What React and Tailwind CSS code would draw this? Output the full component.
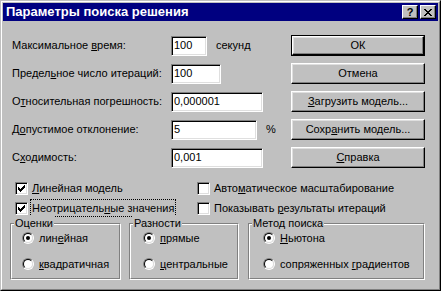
import React from "react";

function U({ children }) {
  return <span className="underline decoration-1 underline-offset-[1px]">{children}</span>;
}

function Btn({ children, isDefault }) {
  if (isDefault) {
    return (
      <div className="h-[21px] w-[134px] border border-black">
        <div className="flex h-full w-full items-center justify-center border border-t-white border-l-white border-r-black border-b-black shadow-[inset_-1px_-1px_0_#808080,inset_1px_1px_0_#dfdfdf]">
          {children}
        </div>
      </div>
    );
  }
  return (
    <div className="flex h-[21px] w-[134px] items-center justify-center border border-t-white border-l-white border-r-black border-b-black shadow-[inset_-1px_-1px_0_#808080,inset_1px_1px_0_#dfdfdf]">
      {children}
    </div>
  );
}

function Edit({ value, w }) {
  return (
    <div
      className={`flex h-[20px] items-center border border-t-[#808080] border-l-[#808080] border-r-white border-b-white bg-white pl-[2px] shadow-[inset_1px_1px_0_#000,inset_-1px_-1px_0_#dfdfdf] ${w}`}
    >
      {value}
    </div>
  );
}

function Row({ label, edit, suffix }) {
  return (
    <div className="flex h-[21px] items-center">
      <div className="w-[159px]">{label}</div>
      {edit}
      {suffix}
    </div>
  );
}

function Check({ checked }) {
  return (
    <div className="h-[13px] w-[13px] shrink-0 border border-t-[#808080] border-l-[#808080] border-r-white border-b-white bg-white shadow-[inset_1px_1px_0_#000,inset_-1px_-1px_0_#dfdfdf]">
      {checked && (
        <svg width="11" height="11" viewBox="0 0 11 11" shapeRendering="crispEdges">
          <path d="M2 4h1v3h-1zM3 5h1v3h-1zM4 6h1v3h-1zM5 5h1v3h-1zM6 4h1v3h-1zM7 3h1v3h-1zM8 2h1v3h-1z" fill="#000" />
        </svg>
      )}
    </div>
  );
}

function Radio({ on }) {
  return (
    <div className="h-[12px] w-[12px] shrink-0 rounded-full border border-t-[#808080] border-l-[#808080] border-r-white border-b-white">
      <div className="flex h-full w-full items-center justify-center rounded-full border border-t-black border-l-black border-r-[#dfdfdf] border-b-[#dfdfdf] bg-white">
        {on && <div className="h-[4px] w-[4px] rounded-full bg-black" />}
      </div>
    </div>
  );
}

function Group({ title, w, pl, children }) {
  return (
    <div className={`relative h-[57px] border border-t-[#808080] border-l-[#808080] border-r-white border-b-white ${w}`}>
      <div className={`flex h-full w-full flex-col gap-[10px] border border-t-white border-l-white border-r-[#808080] border-b-[#808080] pt-[5px] ${pl}`}>
        {children}
      </div>
      <span className="absolute left-[3px] top-[-8px] bg-[#c0c0c0] px-[1px] leading-[14px]">{title}</span>
    </div>
  );
}

function RadioRow({ on, children }) {
  return (
    <div className="flex h-[16px] items-center gap-[5px]">
      <Radio on={on} />
      <span>{children}</span>
    </div>
  );
}

export default function App() {
  return (
    <div className="h-[291px] w-[441px] overflow-hidden font-['Liberation_Sans',Arial,sans-serif] text-[11px] text-black">
      <div className="h-full w-full border border-t-[#c0c0c0] border-l-[#c0c0c0] border-r-black border-b-black bg-[#c0c0c0]">
        <div className="h-full w-full border border-t-white border-l-white border-r-[#808080] border-b-[#808080] p-[1px]">
          {/* Title bar */}
          <div className="flex h-[18px] items-center justify-between bg-[#000080] pl-[3px] pr-[2px]">
            <span className="text-[13px] font-bold text-white">Параметры поиска решения</span>
            <div className="flex gap-[2px]">
              <div className="flex h-[14px] w-[16px] items-center justify-center border border-t-white border-l-white border-r-black border-b-black bg-[#c0c0c0] text-[11px] font-bold leading-none shadow-[inset_-1px_-1px_0_#808080]">
                ?
              </div>
              <div className="flex h-[14px] w-[16px] items-center justify-center border border-t-white border-l-white border-r-black border-b-black bg-[#c0c0c0] shadow-[inset_-1px_-1px_0_#808080]">
                <svg width="8" height="7" viewBox="0 0 8 7" shapeRendering="crispEdges">
                  <path d="M0 0h2v1h-2zM6 0h2v1h-2zM1 1h2v1h-2zM5 1h2v1h-2zM2 2h4v1h-4zM3 3h2v1h-2zM2 4h4v1h-4zM1 5h2v1h-2zM5 5h2v1h-2zM0 6h2v1h-2zM6 6h2v1h-2z" fill="#000" />
                </svg>
              </div>
            </div>
          </div>

          {/* Body */}
          <div className="flex flex-col pl-[9px] pr-[13px] pt-[14px]">
            <div className="flex">
              <div className="flex w-[279px] flex-col gap-[7px]">
                <Row label={<>Максимальное <U>в</U>ремя:</>} edit={<Edit value="100" w="w-[36px]" />} suffix={<span className="ml-[9px]">секунд</span>} />
                <Row label={<>Предел<U>ь</U>ное число итераций:</>} edit={<Edit value="100" w="w-[50px]" />} />
                <Row label={<>О<U>т</U>носительная погрешность:</>} edit={<Edit value="0,000001" w="w-[92px]" />} />
                <Row label={<>Д<U>о</U>пустимое отклонение:</>} edit={<Edit value="5" w="w-[86px]" />} suffix={<span className="ml-[9px]">%</span>} />
                <Row label={<>С<U>х</U>одимость:</>} edit={<Edit value="0,001" w="w-[92px]" />} />
              </div>
              <div className="flex w-[134px] flex-col gap-[7px]">
                <Btn isDefault>ОК</Btn>
                <Btn>Отмена</Btn>
                <Btn><U>З</U>агрузить модель...</Btn>
                <Btn>Сохр<U>а</U>нить модель...</Btn>
                <Btn><U>С</U>правка</Btn>
              </div>
            </div>

            {/* Checkboxes */}
            <div className="mt-[10px] flex pl-[3px]">
              <div className="flex w-[182px] flex-col">
                <div className="flex h-[20px] items-center gap-[2px]">
                  <Check checked />
                  <span className="border border-transparent px-[1px] leading-[16px]"><U>Л</U>инейная модель</span>
                </div>
                <div className="flex h-[20px] items-center gap-[2px]">
                  <Check checked />
                  <span className="border border-dotted border-black px-[1px] leading-[16px]">Неотрицатель<U>н</U>ые значения</span>
                </div>
              </div>
              <div className="flex flex-col">
                <div className="flex h-[20px] items-center gap-[2px]">
                  <Check />
                  <span className="border border-transparent px-[1px] leading-[16px]">Авто<U>м</U>атическое масштабирование</span>
                </div>
                <div className="flex h-[20px] items-center gap-[2px]">
                  <Check />
                  <span className="border border-transparent px-[1px] leading-[16px]">Показывать <U>р</U>езультаты итераций</span>
                </div>
              </div>
            </div>

            {/* Groups */}
            <div className="-ml-[2px] mt-[5px] flex">
              <Group title="Оценки" w="w-[111px]" pl="pl-[10px]">
                <RadioRow on>лин<U>е</U>йная</RadioRow>
                <RadioRow><U>к</U>вадратичная</RadioRow>
              </Group>
              <div className="w-[8px]" />
              <Group title="Разности" w="w-[110px]" pl="pl-[12px]">
                <RadioRow on><U>п</U>рямые</RadioRow>
                <RadioRow><U>ц</U>ентральные</RadioRow>
              </Group>
              <div className="w-[9px]" />
              <Group title="Метод поиска" w="w-[177px]" pl="pl-[13px]">
                <RadioRow on><U>Н</U>ьютона</RadioRow>
                <RadioRow>сопряженных <U>г</U>радиентов</RadioRow>
              </Group>
            </div>
          </div>
        </div>
      </div>
    </div>
  );
}
